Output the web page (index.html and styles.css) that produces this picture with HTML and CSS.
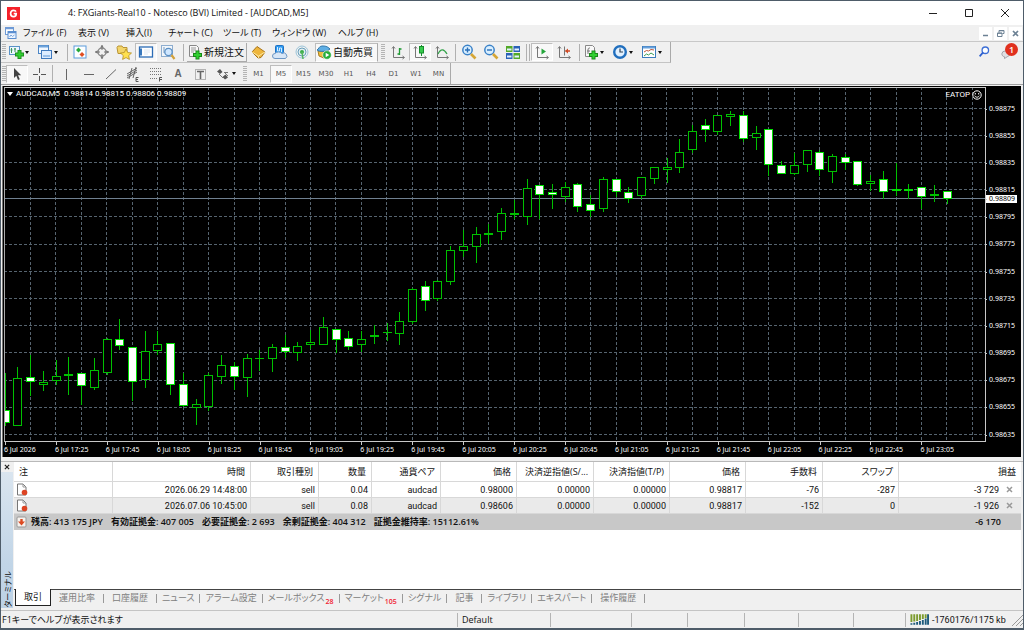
FILE: index.html
```html
<!DOCTYPE html>
<html lang="ja">
<head>
<meta charset="utf-8">
<title>FXGiants-Real10 - [AUDCAD,M5]</title>
<link rel="stylesheet" href="styles.css">
</head>
<body>
<div class="window">
<header class="titlebar">
  <svg class="app-logo" viewBox="0 0 13 13"><rect width="13" height="13" fill="#f5222b"/><path d="M9 4.6C8.500 3.700 7.600 3.400 6.600 3.400 4.700 3.400 3.600 4.700 3.600 6.500S4.700 9.600 6.600 9.600 9.200 8.400 9.200 6.700H6.700" fill="none" stroke="#fff" stroke-width="1.700"/></svg>
  <h1>4: FXGiants-Real10 - Notesco (BVI) Limited - [AUDCAD,M5]</h1>
  <div class="caption-buttons">
    <button aria-label="最小化"><svg viewBox="0 0 10 10"><path d="M1 5.500h8" stroke="#222"/></svg></button>
    <button aria-label="最大化"><svg viewBox="0 0 10 10"><path d="M1.500 1.500h7v7h-7z" fill="none" stroke="#222"/></svg></button>
    <button aria-label="閉じる"><svg viewBox="0 0 10 10"><path d="M1 1l8 8M9 1l-8 8" stroke="#222"/></svg></button>
  </div>
</header>

<nav class="menubar">
  <svg class="mdi-icon" viewBox="0 0 12 12"><rect x=".5" y=".5" width="8" height="7" fill="#fff" stroke="#6f9bd6"/><path d="M1 1.500h7" stroke="#6f9bd6" stroke-width="1.500"/><rect x="3" y="4.500" width="8" height="7" fill="#eef5ff" stroke="#5b8ed0"/><path d="M3 5.500h8" stroke="#5b8ed0" stroke-width="1.500"/><path d="M4.500 10l1.500-2 1.500 1.500L9.500 8" fill="none" stroke="#7aa6dc"/></svg>
  <button class="k4">ファイル (F)</button><button class="k2">表示 (V)</button><button class="k1">挿入(I)</button><button class="k4">チャート (C)</button><button class="k3">ツール (T)</button><button class="k5">ウィンドウ (W)</button><button class="k3">ヘルプ (H)</button>
  <div class="mdi-buttons">
    <button aria-label="チャート最小化"><svg viewBox="0 0 9 9"><path d="M2 6.500h5" stroke="#6c8194" stroke-width="1.500"/></svg></button>
    <button aria-label="チャートを元に戻す"><svg viewBox="0 0 9 9"><path d="M3 3.500V1.500h5v3H6.500M3 1.800h5M1.500 4h4.500v3.500H1.500zM1.500 4.300H6" fill="none" stroke="#6c8194"/></svg></button>
    <button aria-label="チャートを閉じる"><svg viewBox="0 0 9 9"><path d="M2 2l5 5M7 2L2 7" stroke="#6c8194" stroke-width="1.700"/></svg></button>
  </div>
</nav>

<div class="toolbars">
<div class="bars">
<div class="toolbar main-tools">
  <i class="grip"></i>
  <button class="dd" aria-label="新規チャート"><svg viewBox="0 0 16 16"><rect x="1.500" y="2.500" width="10" height="8" fill="#eef6ff" stroke="#5a93c8"/><path d="M3.500 4v5M7 4v4M2.500 6h2M6 5h2" stroke="#3c9a5b"/><path d="M11.500 6v9M7 10.500h9" stroke="#1c8f1c" stroke-width="4"/><path d="M11.500 7v7M8 10.500h7" stroke="#30d030" stroke-width="2.200"/></svg></button>
  <button class="dd" aria-label="プロファイル"><svg viewBox="0 0 16 16"><rect x="1.500" y="1.500" width="10" height="8" fill="#f2f8ff" stroke="#4c86c6"/><path d="M2 2.500h9" stroke="#6ea4dc" stroke-width="2"/><rect x="4.500" y="6.500" width="10" height="8" fill="#dcecff" stroke="#3f79bd"/><path d="M6 12h7" stroke="#5b94d4"/></svg></button>
  <i class="sep s3"></i>
  <button class="tb" aria-label="気配値表示"><svg viewBox="0 0 16 16"><rect x="2" y="2" width="12" height="12" fill="#fdfeff" stroke="#5b9bdc"/><path d="M4 6l2.500-2.500L9 6 6.500 8.500z" fill="#24a83a"/><path d="M7.500 10.500L10 8l2.500 2.500L10 13z" fill="#e04d22"/></svg></button>
  <button class="tb" aria-label="データウィンドウ"><svg viewBox="0 0 16 16"><circle cx="8" cy="8" r="4" fill="none" stroke="#8a8a8a" stroke-width="1.500"/><path d="M8 1v5M8 10v5M1 8h5M10 8h5" stroke="#777"/><path d="M8 1l-1.800 2.500h3.600zM8 15l-1.800-2.500h3.600zM1 8l2.500-1.800v3.600zM15 8l-2.500-1.800v3.600z" fill="#777"/></svg></button>
  <button class="tb" aria-label="ナビゲーター"><svg viewBox="0 0 16 16"><path d="M1 3.500l1-1.500h4l1 1.500h4v6H2z" fill="#f3d56b" stroke="#b99434"/><path d="M10 5l1.700 3.500 3.800.5-2.800 2.600.7 3.800L10 13.600l-3.400 1.800.7-3.800L4.500 9l3.800-.5z" fill="#ffe04e" stroke="#b48d22" stroke-width=".8"/></svg></button>
  <button class="tb on" aria-label="ターミナル"><svg viewBox="0 0 16 16"><rect x="1.500" y="3" width="13" height="10" fill="#fff" stroke="#2c6cb5" stroke-width="1.300"/><path d="M3 4.500v7" stroke="#3978bd" stroke-width="2"/><path d="M6 6h6M6 8h6M6 10h4" stroke="#dce6f1"/></svg></button>
  <button class="tb" aria-label="ストラテジーテスター"><svg viewBox="0 0 16 16"><rect x="1.500" y="1.500" width="11" height="11" fill="#f1f6fb" stroke="#8dadcf"/><path d="M4 3v6M6.500 4v4" stroke="#7b9bbd"/><circle cx="8.500" cy="8" r="3.700" fill="#cfe7ff" stroke="#5c90c4" stroke-width="1.300"/><path d="M11.500 11l3 4" stroke="#d3a13a" stroke-width="2.200"/></svg></button>
  <i class="sep s8"></i>
  <button class="cmd"><svg viewBox="0 0 16 16"><path d="M2.500 1.500h7l2 2v9h-9z" fill="#f8f8f8" stroke="#888"/><path d="M4 4h5M4 6h5M4 8h3" stroke="#999"/><path d="M10.500 6.500v9M6 11h9" stroke="#188818" stroke-width="4"/><path d="M10.500 7.500v7M7 11h7" stroke="#30d030" stroke-width="2.200"/></svg>新規注文</button>
  <button class="tb" aria-label="メタエディター"><svg viewBox="0 0 16 16"><path d="M2 8l5-5.500 8 5.500-4 5.500-3 .5z" fill="#eeb63d" stroke="#a8741c"/><path d="M2 8l6.500 4L15 8M8.500 12v2" fill="none" stroke="#fbe7a1"/></svg></button>
  <button class="tb" aria-label="ストレージ"><svg viewBox="0 0 16 16"><rect x="3.500" y="1.500" width="8" height="8" rx="1" fill="#2e9af0" stroke="#2271c2"/><path d="M5.500 3v4h2V4h2v4" fill="none" stroke="#d7ecff"/><path d="M3 14.500a2.500 2.500 0 0 1 0-5 4 3 0 0 1 7 0 2.500 2.500 0 0 1 3.500 5z" fill="#d7e6f7" stroke="#6d96c4"/></svg></button>
  <button class="tb" aria-label="シグナル"><svg viewBox="0 0 16 16"><circle cx="8" cy="8" r="6" fill="none" stroke="#9bc4d9"/><circle cx="8" cy="8" r="4" fill="#e0eef0" stroke="#6a9fbc"/><circle cx="8" cy="8" r="2" fill="#3cae4a"/><path d="M8 8l1 7" stroke="#55b560" stroke-width="1.500"/></svg></button>
  <button class="cmd on auto"><svg viewBox="0 0 16 16"><path d="M2 7h11l-1 5-4 2-5-2z" fill="#edbd3c" stroke="#aa7c20"/><path d="M1 6c2-1 2-4 5-4s5 0 8 3c-3 3-11 3-13 1z" fill="#5eaee4" stroke="#3178ab"/><circle cx="11" cy="11" r="4.300" fill="#27ad38" stroke="#fff" stroke-width=".6"/><path d="M9.700 8.700v4.600l3.600-2.300z" fill="#fff"/></svg>自動売買</button>
  <i class="grip"></i>
  <button class="tb" aria-label="バーチャート"><svg viewBox="0 0 16 16"><path d="M3.500 3v10.500H14M2 4.500l1.500-2 1.500 2M12.500 12l2 1.500-2 1.500" fill="none" stroke="#777"/><path d="M9.500 4v7M7.500 10h2M9.500 5h2" stroke="#209a35" stroke-width="1.300"/></svg></button>
  <button class="tb on" aria-label="ローソク足"><svg viewBox="0 0 16 16"><path d="M3.500 3v10.500H14M2 4.500l1.500-2 1.500 2M12.500 12l2 1.500-2 1.500" fill="none" stroke="#777"/><path d="M9.500 1v11" stroke="#168d2c"/><rect x="7.500" y="2.500" width="4" height="6.500" fill="#36cb4c" stroke="#168d2c"/></svg></button>
  <button class="tb" aria-label="ラインチャート"><svg viewBox="0 0 16 16"><path d="M3.500 3v10.500H14M2 4.500l1.500-2 1.500 2M12.500 12l2 1.500-2 1.500" fill="none" stroke="#777"/><path d="M4 10c3-6 6-5 9 0" fill="none" stroke="#34a34a" stroke-width="1.300"/></svg></button>
  <i class="sep s5"></i>
  <button class="tb" aria-label="拡大"><svg viewBox="0 0 16 16"><circle cx="6.500" cy="6" r="4.700" fill="#d9efff" stroke="#3b82c8" stroke-width="1.500"/><path d="M4 6h5M6.500 3.500v5" stroke="#2a6fb8" stroke-width="1.400"/><path d="M10 10l4.500 4.500" stroke="#d5a636" stroke-width="2.600"/></svg></button>
  <button class="tb" aria-label="縮小"><svg viewBox="0 0 16 16"><circle cx="6.500" cy="6" r="4.700" fill="#d9efff" stroke="#3b82c8" stroke-width="1.500"/><path d="M4 6h5" stroke="#2a6fb8" stroke-width="1.400"/><path d="M10 10l4.500 4.500" stroke="#d5a636" stroke-width="2.600"/></svg></button>
  <button class="tb" aria-label="整列"><svg viewBox="0 0 16 16"><rect x="1" y="2" width="6.500" height="6" fill="#53a928"/><rect x="8.500" y="2" width="6.500" height="6" fill="#2a62b7"/><rect x="1" y="9" width="6.500" height="6" fill="#2a62b7"/><rect x="8.500" y="9" width="6.500" height="6" fill="#53a928"/><path d="M2 5.500h4.500M9.500 5.500H14M2 12.500h4.500M9.500 12.500H14" stroke="#e5f1ff" stroke-width="2"/></svg></button>
  <i class="sep twin"></i>
  <button class="tb on" aria-label="自動スクロール"><svg viewBox="0 0 16 16"><path d="M3.500 3v10.500H14M2 4.500l1.500-2 1.500 2M12.500 12l2 1.500-2 1.500" fill="none" stroke="#777"/><path d="M7.500 4.500v6l4.500-3z" fill="#24a63b"/></svg></button>
  <button class="tb" aria-label="チャートシフト"><svg viewBox="0 0 16 16"><path d="M3.500 3v10.500H14M2 4.500l1.500-2 1.500 2M12.500 12l2 1.500-2 1.500M8.500 2.500v9" fill="none" stroke="#777"/><path d="M14 7H9.500" stroke="#cf4a24" stroke-width="1.500"/><path d="M12 4.500v5L9 7z" fill="#cf4a24"/></svg></button>
  <i class="sep s8"></i>
  <button class="dd" aria-label="インディケータ"><svg viewBox="0 0 16 16"><path d="M2.500 1.500h7l2 2v9h-9z" fill="#f8f8f8" stroke="#888"/><path d="M5 10V6c0-2 1-2 2-2M4 7h3" fill="none" stroke="#777"/><path d="M10.500 6.500v9M6 11h9" stroke="#188818" stroke-width="4"/><path d="M10.500 7.500v7M7 11h7" stroke="#30d030" stroke-width="2.200"/></svg></button>
  <button class="dd" aria-label="時間足設定"><svg viewBox="0 0 16 16"><circle cx="8" cy="8" r="5.800" fill="#e2f1ff" stroke="#216fbe" stroke-width="2.400"/><path d="M8 4.500V8h3" fill="none" stroke="#345" stroke-width="1.200"/></svg></button>
  <button class="dd" aria-label="定型チャート"><svg viewBox="0 0 16 16"><rect x="1.500" y="2.500" width="13" height="11" fill="#fff" stroke="#3d7dbd"/><path d="M2 3.500h12" stroke="#67a0db" stroke-width="2"/><path d="M3 8l2.500-1.500 2 .5L10 5.500l3 .5" fill="none" stroke="#c05434"/><path d="M3 12l2.500-2 2 1L10 9l3 2" fill="none" stroke="#3a9c52"/></svg></button>
</div>
<div class="toolbar line-tools">
  <i class="grip"></i>
  <button class="tb on" aria-label="カーソル"><svg viewBox="0 0 16 16"><path d="M5 2v10l2.300-2.200L9 14l1.800-.8L9 9.300h3.200z" fill="#444"/></svg></button>
  <button class="tb" aria-label="十字カーソル"><svg viewBox="0 0 16 16"><path d="M8.500 2v5M8.500 10v5M2 8.500h5M10 8.500h5" stroke="#555"/></svg></button>
  <i class="sep s5"></i>
  <button class="tb" aria-label="垂直線"><svg viewBox="0 0 16 16"><path d="M8.500 3v11" stroke="#666"/></svg></button>
  <button class="tb" aria-label="水平線"><svg viewBox="0 0 16 16"><path d="M4 8.500h10" stroke="#666"/></svg></button>
  <button class="tb" aria-label="トレンドライン"><svg viewBox="0 0 16 16"><path d="M4 13L14 3.500" stroke="#666"/></svg></button>
  <button class="tb fib" aria-label="チャネル"><svg viewBox="0 0 16 16"><path d="M2 8l10-6M2 12l10-6M4 13l3-11M8 12l3-11M2 10l10-6" stroke="#666"/><path d="M13.500 11.500H11v4h2.500M11 13.500h2" fill="none" stroke="#555"/></svg></button>
  <button class="tb fib" aria-label="フィボナッチ"><svg viewBox="0 0 16 16"><path d="M2 2.500h12M2 5.500h12M2 8.500h12M2 12.500h7" stroke="#777" stroke-dasharray="1 1"/><path d="M14 11.500h-2.500v4M11.500 13.500H14" fill="none" stroke="#555"/></svg></button>
  <button class="tb glyph" aria-label="テキスト">A</button>
  <button class="tb" aria-label="テキストラベル"><svg viewBox="0 0 16 16"><rect x="3.500" y="3.500" width="10" height="10" fill="none" stroke="#777" stroke-dasharray="1 1"/><path d="M5 5.500h7M8.500 5.500V13" stroke="#666" stroke-width="1.600"/></svg></button>
  <button class="dd arrows" aria-label="矢印"><svg viewBox="0 0 16 16"><path d="M2 5.500L5 3l2.500 3L5 8zM7.500 11l3-2.500 2.500 3-3 2z" fill="#555"/><path d="M4 8l4 4M9 6l4 4M10 6.500h3" stroke="#777"/></svg></button>
  <i class="grip"></i>
  <button class="tf">M1</button><button class="tf on">M5</button><button class="tf">M15</button><button class="tf">M30</button><button class="tf">H1</button><button class="tf">H4</button><button class="tf">D1</button><button class="tf">W1</button><button class="tf">MN</button>
</div>
</div>
<div class="notices">
  <button aria-label="検索"><svg viewBox="0 0 16 16"><circle cx="9.500" cy="6" r="3.700" fill="#fff" stroke="#3d6fd6" stroke-width="1.500"/><path d="M7 8.500l-4 4.500" stroke="#2c5fd0" stroke-width="2"/></svg></button>
  <button class="chat" aria-label="チャット"><svg viewBox="0 0 16 16"><path d="M1 10a4.500 3.500 0 1 1 6 3.500L4 15.500v-2C2 13 1 12 1 10z" fill="#e0e0e3" stroke="#9c9ca2"/></svg><span class="badge">1</span></button>
</div>
</div>

<main class="chart">
  <div class="plot">
    <svg id="candles" viewBox="4 87 981 355" preserveAspectRatio="none" role="img" aria-label="AUDCAD 5分足"></svg>
    <p class="symbol">AUDCAD,M5&nbsp; 0.98814 0.98815 0.98806 0.98809</p>
    <p class="expert">EATOP <svg viewBox="0 0 10 10"><circle cx="5" cy="5" r="4.200" fill="none" stroke="#fff"/><path d="M3.300 3v1.500M6.700 3v1.500M2.700 5.700c1 2 3.600 2 4.600 0" fill="none" stroke="#fff"/></svg></p>
  </div>
  <div class="prices" id="prices"></div>
  <div class="times" id="times"></div>
</main>

<section class="terminal">
  <aside class="strip"><button aria-label="閉じる"><svg viewBox="0 0 7 7"><path d="M1 1l5 5M6 1L1 6" stroke="#222" stroke-width="1.400"/></svg></button><span>ターミナル</span></aside>
  <div class="panel">
    <div class="sheet">
    <table>
      <colgroup><col class="c98"><col class="c138"><col class="c68"><col class="c53"><col class="c69"><col class="c76"><col class="c77"><col class="c76"><col class="c76"><col class="c77"><col class="c76"><col></colgroup>
      <thead><tr><th>注</th><th>時間</th><th>取引種別</th><th>数量</th><th>通貨ペア</th><th>価格</th><th>決済逆指値(S/...</th><th>決済指値(T/P)</th><th>価格</th><th>手数料</th><th>スワップ</th><th>損益</th></tr></thead>
      <tbody>
        <tr><td><svg class="doc" viewBox="0 0 12 13"><path d="M1.500 1h5.500l3 3v8H1.500z" fill="#fff" stroke="#777"/><path d="M7 1v3h3" fill="none" stroke="#999"/><circle cx="8.500" cy="9.500" r="2.800" fill="#dd4423"/></svg></td><td>2026.06.29 14:48:00</td><td>sell</td><td>0.04</td><td>audcad</td><td>0.98000</td><td>0.00000</td><td>0.00000</td><td>0.98817</td><td>-76</td><td>-287</td><td>-3 729<button class="x" aria-label="決済"><svg viewBox="0 0 7 7"><path d="M1 1l5 5M6 1L1 6" stroke="#999" stroke-width="1.500"/></svg></button></td></tr>
        <tr class="alt"><td><svg class="doc" viewBox="0 0 12 13"><path d="M1.500 1h5.500l3 3v8H1.500z" fill="#fff" stroke="#777"/><path d="M7 1v3h3" fill="none" stroke="#999"/><circle cx="8.500" cy="9.500" r="2.800" fill="#dd4423"/></svg></td><td>2026.07.06 10:45:00</td><td>sell</td><td>0.08</td><td>audcad</td><td>0.98606</td><td>0.00000</td><td>0.00000</td><td>0.98817</td><td>-152</td><td>0</td><td>-1 926<button class="x" aria-label="決済"><svg viewBox="0 0 7 7"><path d="M1 1l5 5M6 1L1 6" stroke="#999" stroke-width="1.500"/></svg></button></td></tr>
        <tr class="total"><td colspan="11"><div class="sums"><svg class="bal" viewBox="0 0 11 12"><rect x="1" y="1" width="9" height="10" rx="1" fill="#f6f2ee" stroke="#999"/><path d="M4.300 3h2.400v2.500H9L5.500 9.500 2 5.500h2.300z" fill="#dc4a22"/></svg><span>残高: 413 175 JPY</span><span>有効証拠金: 407 005</span><span>必要証拠金: 2 693</span><span>余剰証拠金: 404 312</span><span>証拠金維持率: 15112.61%</span></div></td><td>-6 170</td></tr>
      </tbody>
    </table>
    </div>
    <div class="tabs">
      <button class="tab active">取引</button><button class="tab">運用比率</button><button class="tab">口座履歴</button><button class="tab kana">ニュース</button><button class="tab kana">アラーム設定</button><button class="tab kana">メールボックス<b>28</b></button><button class="tab kana">マーケット<b>105</b></button><button class="tab kana">シグナル</button><button class="tab">記事</button><button class="tab kana">ライブラリ</button><button class="tab kana">エキスパート</button><button class="tab">操作履歴</button>
    </div>
  </div>
</section>

<footer class="status">
  <span>F1キーでヘルプが表示されます</span><span>Default</span><span></span><span></span><span></span><span></span><span></span><span></span>
  <span class="net"><svg viewBox="0 0 20 11"><path d="M1.500 0v8M4.500 0v7.500M7.500 0v7M10.500 0v6M13.500 0v5M16.500 0v4" stroke="#7c9b2d" stroke-width="2"/><path d="M1.500 9.500V11M4.500 9V11M7.500 8V11M10.500 7V11M13.500 6V11M16.500 4.500V11M19 0v11" stroke="#1d5b7c" stroke-width="2"/></svg>-1760176/1175 kb<svg class="size" viewBox="0 0 12 12"><path d="M1 12L12 1M5 12l7-7M9 12l3-3" stroke="#999"/></svg></span>
</footer>
</div>
<script src="chart.js"></script>
</body>
</html>
```
FILE: styles.css
```css
* { box-sizing: border-box; }
body { margin: 0; font-family: "Open Sans", "Noto Sans CJK JP", sans-serif; font-size: 9px; line-height: 12px; color: #111; }
button { margin: 0; padding: 0; border: 0; background: none; font: inherit; color: inherit; }
svg { display: block; flex: none; }
h1, p { margin: 0; font-weight: 400; }
.window { min-height: 100vh; display: flex; flex-direction: column; background: #f0f0f0; border: 1px solid #4e5c69; border-bottom-width: 2px; }

.titlebar { height: 24px; display: flex; align-items: center; background: #fff; padding-left: 6px; }
.app-logo { width: 13px; height: 13px; }
.titlebar h1 { margin-left: 48px; flex: 1; font-size: 9px; white-space: nowrap; }
.caption-buttons { display: flex; }
.caption-buttons button { width: 36px; height: 22px; display: grid; place-items: center; }
.caption-buttons svg { width: 10px; height: 10px; }

.menubar { height: 17px; display: flex; align-items: center; padding-left: 4px; border-bottom: 1px solid #c8c8c8; font-feature-settings: "palt"; }
.mdi-icon { width: 12px; height: 12px; margin-right: 6px; }
.menubar button { text-align: left; white-space: nowrap; }
.menubar .k1 { width: 42px; }
.menubar .k2 { width: 48px; }
.menubar .k3 { width: 49px; }
.menubar .k4 { width: 55px; }
.menubar .k5 { width: 66px; }
.mdi-buttons { margin-left: auto; display: flex; gap: 2px; padding-right: 1px; }
.mdi-buttons button { width: 13px; height: 13px; background: #fff; display: grid; place-items: center; }
.mdi-buttons svg { width: 9px; height: 9px; }

.toolbars { display: flex; justify-content: space-between; border-bottom: 1px solid #a0a0a0; }
.bars { display: flex; flex-direction: column; align-items: flex-start; }
.toolbar { height: 21px; display: flex; align-items: center; border-right: 1px solid #aaa; border-bottom: 1px solid #c4c4c4; }
.line-tools { border-bottom: 0; }
.grip { width: 4px; height: 16px; margin: 0 2px 0 1px; background: repeating-linear-gradient(#b4b4b4 0 1px, #f0f0f0 1px 2px); }
.line-tools .grip { margin: 0 0 0 1px; }
.sep { height: 17px; background: linear-gradient(#b0b0b0, #b0b0b0) center / 1px 100% no-repeat; }
.s3 { width: 3px; }
.s5 { width: 5px; }
.s8 { width: 8px; }
.twin { background: none; border: solid #b0b0b0; border-width: 0 1px; width: 4px; margin: 0 1px 0 2px; }
.tb { width: 22px; height: 18px; display: grid; place-items: center; }
.tb svg, .dd svg, .cmd svg { width: 16px; height: 16px; }
.dd { width: 29px; height: 18px; display: flex; align-items: center; gap: 1px; }
.dd::after { content: ""; border: 2px solid transparent; border-top: 3px solid #111; border-bottom: 0; }
.arrows { width: 31px; padding-left: 4px; }
.on { background: #f8f8f8; border: 1px solid #bdbdbd; border-right-color: #fff; border-bottom-color: #fff; }
.cmd { width: 60px; height: 19px; display: flex; align-items: center; gap: 1px; white-space: nowrap; font-size: 10px; border-right: 1px solid #aaa; border-bottom: 1px solid #aaa; }
.auto { width: 63px; margin: 0 2px; border-bottom-color: #fff; }
.fib { width: 23px; }
.glyph { font: bold 10px "Liberation Sans", sans-serif; color: #666; }
.tf { width: 22px; height: 18px; font-size: 7px; color: #555; text-align: center; font-family: "DejaVu Sans", sans-serif; }
.tf:nth-of-type(odd) { width: 23px; }
.notices { display: flex; gap: 7px; padding: 1px 5px 0 0; }
.notices button { width: 17px; height: 18px; }
.notices svg { width: 14px; height: 16px; }
.chat { position: relative; }
.badge { position: absolute; left: 4px; top: 0; width: 13px; height: 13px; border-radius: 50%; background: #e0301e; color: #fff; font-size: 9px; line-height: 13px; font-weight: 600; }

.chart { flex: 1; min-height: 300px; display: grid; grid-template: 1fr 15px / 1fr 36px; background: #000; color: #fff; margin: 1px 2px 0 1px; padding: 1px 0 0 1px; border-left: 1px solid #777; font: 7px/8px "Noto Sans", sans-serif; }
.plot { position: relative; min-height: 0; }
.plot::after { content: ""; position: absolute; inset: 0 -1px 0 0; border: 1px solid #c8c8c8; border-left-color: #aaa; pointer-events: none; }
#candles { position: absolute; left: 0; top: 0; width: 100%; height: 100%; shape-rendering: crispEdges; }
.grid { stroke: #56646f; stroke-dasharray: 3 2; }
.bid { stroke: #708090; }
.wick { stroke: #00c000; }
.body { fill: #000; stroke: #00c000; }
.bear { fill: #fff; stroke: #00e000; }
.symbol { position: absolute; left: 3px; top: 3px; white-space: nowrap; font: 8px/8px Roboto, sans-serif; }
.symbol::before { content: ""; display: inline-block; border: 3px solid transparent; border-top: 4px solid #fff; border-bottom: 0; margin-right: 3px; }
.expert { position: absolute; right: 3px; top: 3px; display: flex; align-items: center; gap: 2px; font: 8px/8px Roboto, sans-serif; }
.expert svg { width: 10px; height: 10px; }
.prices { position: relative; }
.prices span { position: absolute; left: 1px; padding-left: 3px; transform: translateY(-50%); }
.prices span::before { content: ""; position: absolute; left: -1px; top: 4px; width: 2px; height: 1px; background: #ccc; }
.prices .now { background: #fff; color: #000; padding: 0 2px 0 3px; }
.times { position: relative; grid-column: 1 / 3; }
.times span { position: absolute; top: 4px; white-space: nowrap; }
.times span::before { content: ""; position: absolute; left: 1px; top: -4px; width: 1px; height: 3px; background: #ccc; }

.terminal { display: flex; height: 149px; margin-top: 4px; border-top: 1px solid #b9b9b9; }
.strip { width: 12px; display: flex; flex-direction: column; align-items: center; justify-content: space-between; background: linear-gradient(#f0f0f0 10px, #dae5ef 10px, #c1d5e7 70%, #bdd2e6); margin-bottom: 2px; }
.strip button { padding: 2px; }
.strip button svg { width: 6px; height: 6px; }
.strip span { writing-mode: vertical-rl; transform: rotate(180deg); font-size: 8px; line-height: 11px; white-space: nowrap; text-orientation: sideways; font-feature-settings: "palt"; }
.panel { flex: 1; min-width: 0; display: flex; flex-direction: column; padding: 0 2px 4px 1px; }
.sheet { flex: 1; background: #fff; border-bottom: 1px solid #444; }
table { width: 100%; table-layout: fixed; border-collapse: separate; border-spacing: 0; }
.c98 { width: 99px; } .c138 { width: 138px; } .c68 { width: 68px; } .c53 { width: 53px; } .c69 { width: 69px; } .c76 { width: 76px; } .c77 { width: 77px; }
th, td { padding: 0 3px 0 0; text-align: right; font-weight: 400; white-space: nowrap; border-right: 1px solid #d8d8d8; border-bottom: 1px solid #d8d8d8; height: 16px; line-height: 14px; }
th { height: 20px; padding-right: 5px; font-feature-settings: "palt"; }
th:first-child { text-align: left; padding-left: 5px; }
th:last-child, td:last-child { border-right: 0; }
td { font-family: Roboto, "Noto Sans CJK JP", sans-serif; font-size: 9px; }
.doc { width: 12px; height: 13px; margin-left: 2px; }
.alt td { background: #eaeaea; }
.x { width: 19px; padding: 0 5px 0 7px; }
.x svg { width: 7px; height: 7px; }
.total td { background: #c8c8c8; border: 0; font-family: "Open Sans", "Noto Sans CJK JP", sans-serif; font-weight: 600; }
.total td:last-child { padding-right: 20px; }
.sums { display: flex; align-items: center; gap: 8px; padding-left: 2px; }
.bal { width: 11px; height: 12px; margin-right: -4px; }
.tabs { display: flex; align-items: center; height: 16px; font-feature-settings: "palt"; color: #808080; padding-left: 1px; }
.tab { padding: 0 9px 0 8px; line-height: 12px; white-space: nowrap; background: linear-gradient(#999, #999) right center / 1px 9px no-repeat; }
.kana { padding: 0 6px 0 5px; }
.tab b { color: #f02030; font-size: 7px; line-height: 7px; position: relative; top: 3px; font-weight: 600; margin-left: 1px; }
.tab.active { height: 17px; width: 36px; background: #fff; color: #111; border: solid #222; border-width: 0 1px 1px; margin-top: -1px; }

.status { display: grid; grid-template-columns: 456fr 93fr 81fr 56fr 57fr 54fr 55fr 52fr 118fr; height: 18px; align-items: center; border-top: 1px solid #c4c4c4; font-feature-settings: "palt"; white-space: nowrap; }
.status > span { height: 14px; line-height: 14px; padding-left: 4px; border-left: 1px solid #b4b4b4; }
.status > span:first-child { border: 0; padding-left: 1px; }
.net { display: flex; align-items: center; gap: 3px; font-family: Roboto, sans-serif; }
.net svg { width: 19px; height: 11px; }
.net .size { width: 12px; height: 12px; margin-left: auto; }
```
FILE: chart.js
```js
// One row per five-minute bar: high, body top, body bottom, low, 1 when the bar closed lower.
const bars = [
[373,410,422,425,1],[367,378,425,425,0],[355,377,381,395,1],[371,382,384,390,0],[360,376,380,384,0],
[357,374,375,394,0],[373,373,385,404,1],[358,370,387,389,0],[338,339,372,374,0],[319,339,345,349,1],
[347,347,381,400,1],[331,351,379,387,0],[331,344,350,354,0],[343,343,384,394,1],[373,384,405,406,1],
[399,404,407,424,0],[373,375,406,410,0],[355,365,376,383,0],[362,366,376,389,1],[354,358,377,396,0],
[350,358,358,370,0],[344,347,358,371,0],[335,347,351,357,1],[342,346,352,360,0],[330,342,344,348,0],
[317,327,344,344,0],[329,329,339,352,1],[331,338,346,349,1],[331,339,344,351,0],[325,335,336,343,0],
[323,332,332,340,0],[312,321,333,344,0],[288,289,321,323,0],[281,286,300,310,1],[280,281,298,300,0],
[246,250,281,284,0],[230,246,250,256,0],[227,234,246,262,0],[224,233,234,243,0],[208,213,231,239,0],
[200,213,214,218,0],[179,188,216,224,0],[185,185,194,218,1],[184,192,194,208,1],[182,187,196,201,0],
[183,184,206,211,1],[195,204,210,216,1],[177,179,208,211,0],[179,179,191,196,1],[187,192,198,202,1],
[177,177,195,198,0],[167,167,178,183,0],[158,167,169,182,0],[139,152,167,172,0],[125,131,149,152,0],
[119,125,129,141,1],[115,115,131,134,0],[111,114,116,125,0],[111,115,138,141,1],[126,133,137,149,0],
[129,129,164,175,1],[161,165,173,173,1],[153,165,173,174,0],[150,150,164,171,0],[150,152,169,175,1],
[154,156,171,182,0],[154,157,162,169,1],[161,161,184,185,1],[175,181,183,190,0],[171,179,191,198,1],
[163,189,190,195,1],[184,189,190,198,1],[187,187,196,208,1],[185,194,195,201,0],[191,191,198,203,1]
];
const svg = document.getElementById("candles");
const parts = [];
const top0 = 87, width = 981, height = 355;

for (let i = 0; i < 38; i++) {
  const x = Math.floor(30.5 + i * 25.457) + 0.5;
  parts.push(`<path class="grid" d="M${x} 87V442"/>`);
}
for (let i = 0; i < 13; i++) {
  const y = Math.floor(108.3 + i * 27.17) + 0.5;
  parts.push(`<path class="grid" d="M4 ${y}H985"/>`);
}
parts.push('<path class="bid" d="M4 198.500H985"/>');
bars.forEach(([high, a, b, low, bear], i) => {
  const x = Math.floor(5.2 + i * 12.728) + 0.5;
  parts.push(`<path class="wick" d="M${x} ${high}V${low + 1}"/>`);
  parts.push(a === b
    ? `<path class="wick" d="M${x - 4.5} ${a + 0.5}h9"/>`
    : `<rect class="body${bear ? " bear" : ""}" x="${x - 4}" y="${a + 0.5}" width="8" height="${b - a}"/>`);
});
svg.innerHTML = parts.join("");

const prices = document.getElementById("prices");
for (let i = 0; i < 13; i++) {
  const s = document.createElement("span");
  s.textContent = (0.98875 - i * 0.0002).toFixed(5);
  s.style.top = ((108.5 + i * 27.17 - top0) / height * 100) + "%";
  prices.append(s);
}
const now = document.createElement("span");
now.className = "now";
now.textContent = "0.98809";
now.style.top = ((198.5 - top0) / height * 100) + "%";
prices.append(now);

const times = document.getElementById("times");
for (let i = 0; i < 19; i++) {
  const s = document.createElement("span");
  const m = 17 * 60 + 5 + i * 20;
  s.textContent = i ? `6 Jul ${Math.floor(m / 60)}:${String(m % 60).padStart(2, "0")}` : "6 Jul 2026";
  s.style.left = ((i * 50.91) / (width + 36) * 100) + "%";
  times.append(s);
}
```
